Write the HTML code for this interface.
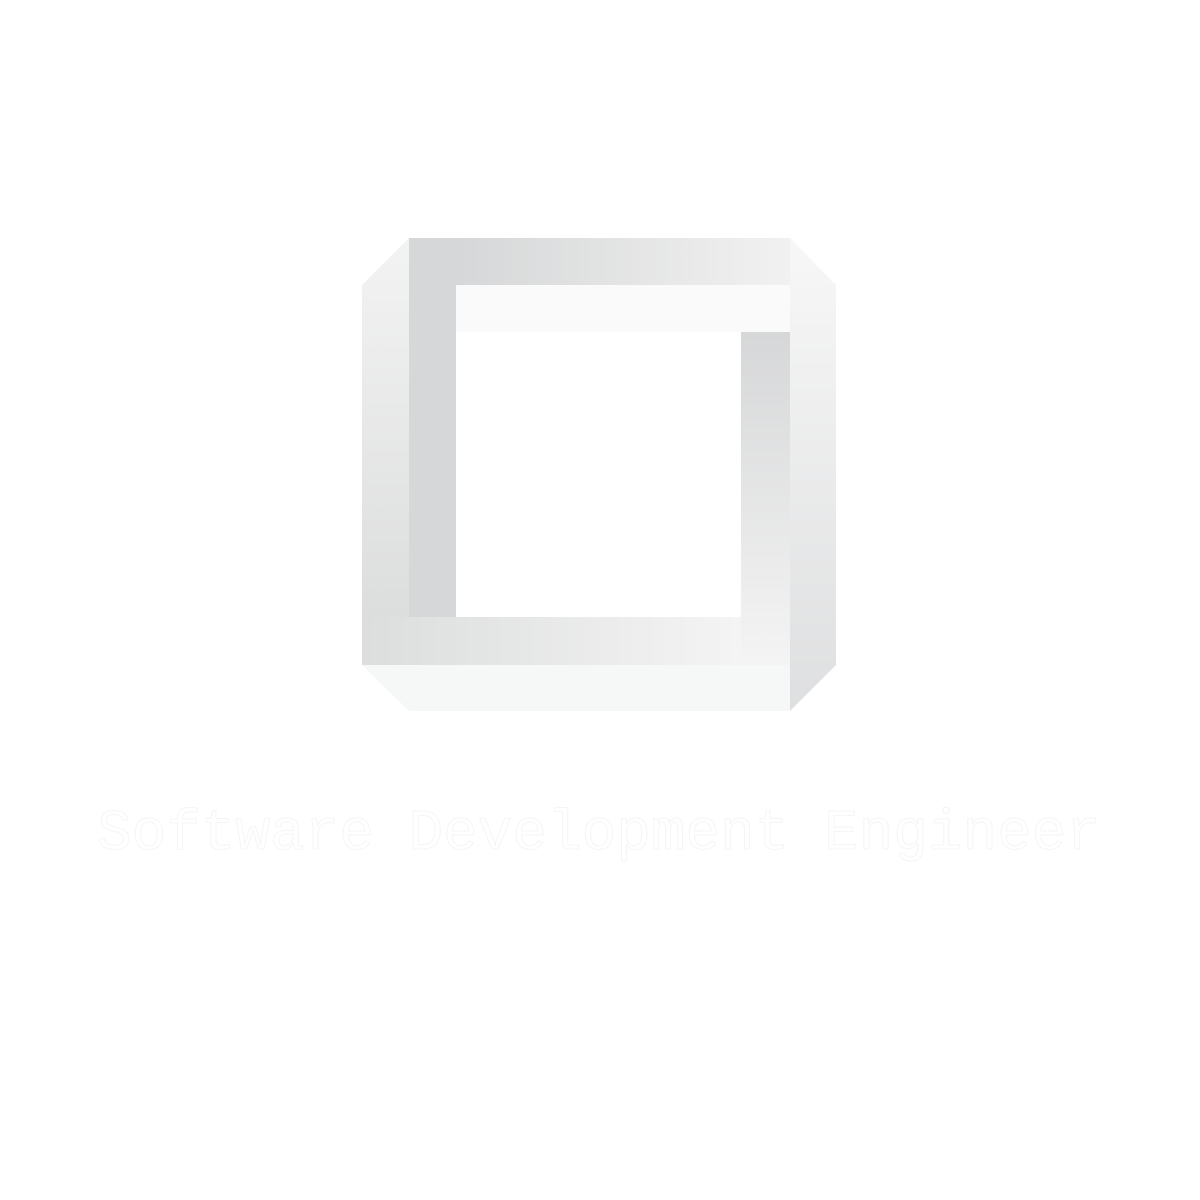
<!DOCTYPE html>
<html><head><meta charset="utf-8"><style>
html,body{margin:0;padding:0;background:#fff;width:1200px;height:1200px;overflow:hidden}
svg{position:absolute;left:0;top:0}
.t{position:absolute;left:97px;top:802px;font-family:"Liberation Mono","Courier New",monospace;font-size:57.7px;color:#fff;-webkit-text-stroke:1px #f5f5f5;white-space:nowrap;letter-spacing:0}
</style></head><body>
<svg width="1200" height="1200">
<defs>
<linearGradient id="top" x1="0" x2="1" y1="0" y2="0"><stop offset="0" stop-color="#d6d7d8"/><stop offset="1" stop-color="#f1f1f1"/></linearGradient>
<linearGradient id="left" x1="0" x2="0" y1="0" y2="1"><stop offset="0" stop-color="#f3f3f3"/><stop offset="1" stop-color="#dcdddd"/></linearGradient>
<linearGradient id="bot" x1="0" x2="1" y1="0" y2="0"><stop offset="0" stop-color="#dcdddd"/><stop offset="1" stop-color="#f4f4f4"/></linearGradient>
<linearGradient id="rs" x1="0" x2="0" y1="0" y2="1"><stop offset="0" stop-color="#d6d7d8"/><stop offset="1" stop-color="#f4f4f4"/></linearGradient>
<linearGradient id="rf" x1="0" x2="0" y1="0" y2="1"><stop offset="0" stop-color="#f7f7f7"/><stop offset="1" stop-color="#dedfe0"/></linearGradient>
</defs>
<polygon points="409,238 362,285 362,617 409,617" fill="url(#left)"/>
<rect x="409" y="238" width="47" height="379" fill="#d6d7d8"/>
<rect x="456" y="238" width="334" height="47" fill="url(#top)"/>
<rect x="409" y="238" width="47" height="47" fill="#d6d7d8"/>
<polygon points="456,285 836,285 790,238 790,285" fill="#f6f6f6"/>
<rect x="456" y="285" width="334" height="47" fill="#fafafa"/>
<rect x="741" y="332" width="49" height="333" fill="url(#rs)"/>
<polygon points="790,238 836,285 836,665 790,711" fill="url(#rf)"/>
<rect x="362" y="617" width="379" height="48" fill="url(#bot)"/>
<polygon points="362,665 790,665 790,711 409,711" fill="#f6f7f7"/>
</svg>
<div class="t">Software Development Engineer</div>
</body></html>
